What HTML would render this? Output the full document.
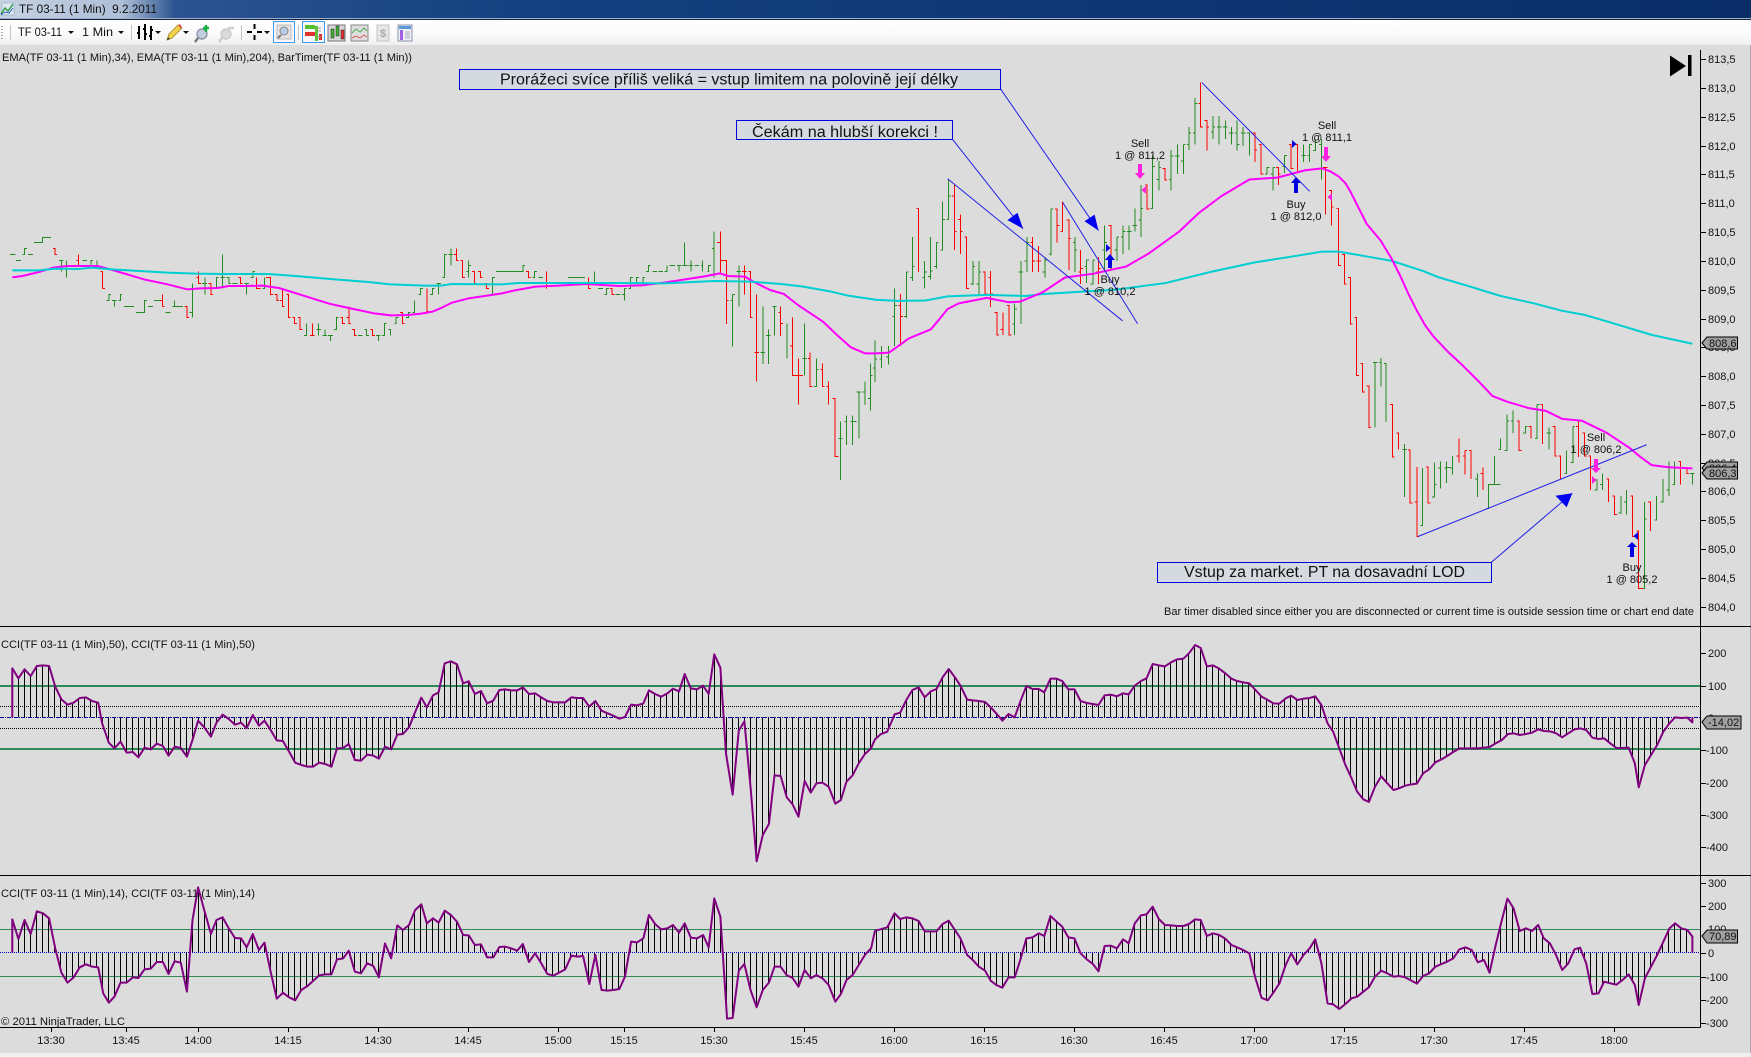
<!DOCTYPE html>
<html><head><meta charset="utf-8"><title>TF 03-11</title>
<style>
html,body{margin:0;padding:0;background:#dcdcdc;width:1751px;height:1057px;overflow:hidden}
svg{display:block;position:absolute;left:0;top:0}
text{font-family:"Liberation Sans",sans-serif;font-size:11px;fill:#111}
.b{vector-effect:non-scaling-stroke}
.c{text-anchor:middle}
</style></head><body>
<svg width="1751" height="1057" viewBox="0 0 1751 1057" xmlns="http://www.w3.org/2000/svg">
<defs>
<linearGradient id="tb" x1="0" x2="1" y1="0" y2="0"><stop offset="0" stop-color="#c5d2e2"/><stop offset=".07" stop-color="#aebfd6"/><stop offset=".1" stop-color="#2c5490"/><stop offset=".3" stop-color="#13407f"/><stop offset="1" stop-color="#0a2d68"/></linearGradient>
<linearGradient id="wb" x1="0" x2="0" y1="0" y2="1"><stop offset="0" stop-color="#fff"/><stop offset=".55" stop-color="#fbfbfb"/><stop offset="1" stop-color="#efefef"/></linearGradient>
<pattern id="st" patternUnits="userSpaceOnUse" x="12" y="0" width="6" height="10"><rect x="0" y="0" width="1" height="10" fill="#000"/></pattern>
<path id="p2l" class="b" d="M22 292L22 145 33 175 44 148 55 168 66 138 77 136 88 138 99 200 110 238 121 254 132 248 143 234 154 232 165 243 176 248 183 310 195 368 205 385 216 365 227 398 238 396 248 412 259 383 270 388 281 371 292 378 302 407 313 380 324 384 335 410 345 360 355 302 366 322 378 350 388 308 399 284 410 297 421 314 432 308 442 325 453 285 464 317 474 302 485 330 496 361 507 363 518 395 529 428 540 435 551 440 561 440 572 428 583 432 594 440 604 385 615 384 625 372 636 420 647 422 658 404 669 407 679 416 690 380 701 388 712 344 722 342 733 322 744 276 755 233 765 262 776 226 786 217 797 130 808 124 819 133 830 190 840 184 851 222 862 213 873 250 884 242 895 210 905 208 916 211 927 211 937 202 948 222 959 220 970 232 981 243 992 247 1002 247 1013 247 1024 232 1035 234 1045 234 1056 260 1067 243 1078 272 1089 280 1099 287 1110 296 1120 291 1131 254 1142 256 1153 250 1163 211 1174 222 1185 230 1196 220 1206 206 1217 214 1227 162 1238 205 1249 208 1260 197 1270 222 1280 103 1291 143 1301 400 1313 524 1324 332 1334 304 1345 500 1356 724 1367 645 1378 612 1388 466 1399 468 1410 532 1420 552 1431 590 1442 483 1453 518 1463 490 1474 488 1485 500 1497 551 1507 540 1517 485 1528 466 1539 430 1550 402 1561 385 1568 358 1578 343 1590 335 1601 292"/>
<path id="p2r" class="b" d="M33 292L35 283 45 278 56 240 67 210 78 202 89 232 100 214 110 207 121 172 132 147 143 172 153 197 165 239 175 241 186 243 197 246 207 262 217 280 228 302 239 282 250 292 260 245 271 198 282 207 293 207 303 217 314 176 325 176 335 183 346 208 357 208 368 243 379 249 390 252 400 255 411 226 422 224 433 229 444 220 454 223 465 197 476 183 486 175 497 132 508 136 519 139 530 127 541 118 552 116 562 100 573 75 583 84 594 139 605 136 616 146 627 160 638 176 648 183 659 187 670 190 681 210 692 230 703 240 713 250 724 251 735 235 745 227 756 240 767 236 778 234 788 229 799 255 810 310 820 335 831 385 842 435 853 475 863 515 874 538 884 546 895 500 906 469 917 490 928 510 938 505 949 497 960 493 970 491 981 460 992 448 1003 427 1014 418 1024 408 1035 396 1046 385 1057 385 1068 385 1079 385 1090 383 1100 381 1111 370 1122 360 1133 342 1143 340 1154 345 1165 342 1176 338 1187 328 1197 333 1208 334 1219 340 1230 352 1241 340 1252 328 1262 325 1273 330 1284 353 1295 357 1305 355 1316 370 1327 384 1338 384 1349 383 1360 430 1367 502 1378 435 1389 405 1400 375 1411 335 1422 310 1432 292 1443 294 1454 293 1463 307 1463 292"/>
<path id="p3l" class="b" d="M22 997L22 898 33 957 44 900 55 942 66 874 77 880 88 895 99 985 110 1058 121 1088 132 1072 143 1042 154 1033 165 1040 176 1042 185 1120 195 1148 205 1130 216 1088 227 1088 238 1072 248 1074 259 1048 270 1046 281 1026 292 1026 302 1062 313 1024 324 1028 335 1115 345 900 355 802 366 870 378 942 388 900 399 892 410 925 421 954 432 955 442 982 453 942 464 990 474 968 485 1055 496 1136 507 1118 518 1132 529 1141 540 1110 551 1098 561 1083 572 1066 583 1063 594 1063 604 1018 615 1015 625 992 636 1055 647 1060 658 1030 669 1038 679 1072 690 970 701 1015 712 916 722 930 733 915 744 870 755 853 765 910 776 895 786 908 797 872 808 885 819 905 830 945 840 946 851 975 862 973 873 1012 884 1012 895 981 905 980 916 985 927 992 937 972 948 1026 959 1000 970 1030 981 1062 992 1067 1002 1058 1013 1048 1024 1007 1035 1010 1045 1008 1056 1092 1067 1005 1078 1110 1089 1112 1099 1110 1110 1107 1120 1070 1131 965 1142 967 1153 955 1163 885 1174 912 1185 928 1196 925 1206 915 1217 938 1227 910 1238 953 1249 955 1260 945 1270 982 1280 835 1291 890 1303 1196 1313 1194 1324 1052 1334 1032 1345 1110 1356 1162 1367 1110 1378 1088 1388 1040 1399 1040 1410 1066 1420 1073 1431 1100 1442 1050 1453 1075 1463 1065 1474 1075 1485 1095 1497 1145 1507 1122 1517 1080 1528 1065 1539 1035 1550 1005 1554 997"/>
<path id="p3r" class="b" d="M-14 997L-7 985 0 932 10 928 22 922 35 880 45 897 56 892 67 895 78 903 89 934 100 934 110 934 121 912 132 902 143 930 153 955 165 1005 175 1020 186 1040 197 1052 207 1082 217 1095 228 1103 239 1072 250 1072 260 1020 271 955 282 952 293 940 303 948 314 888 325 905 335 920 346 952 357 955 368 1000 379 1018 390 1032 400 1054 411 978 422 977 433 985 444 958 454 970 465 910 476 886 486 883 497 860 508 897 519 915 530 916 541 918 552 918 562 912 573 898 583 900 594 948 605 940 616 945 627 956 638 975 648 982 659 990 670 1000 681 1075 692 1134 703 1141 713 1118 724 1090 735 1035 745 1000 756 1033 767 1005 778 985 788 958 799 1030 810 1150 820 1153 831 1167 842 1152 853 1135 863 1130 874 1115 884 1102 895 1070 906 1052 917 1060 928 1070 938 1068 949 1072 960 1082 970 1091 981 1068 992 1060 1003 1040 1014 1032 1024 1025 1035 1015 1046 988 1057 982 1068 990 1079 1027 1090 1020 1100 1058 1111 975 1122 900 1132 836 1143 865 1154 933 1165 925 1176 933 1187 915 1197 955 1208 970 1219 1005 1230 1050 1241 1030 1252 988 1262 983 1273 1030 1284 1122 1295 1120 1305 1085 1316 1090 1327 1094 1338 1080 1349 1063 1360 1095 1367 1155 1378 1075 1389 1040 1400 1005 1411 965 1422 925 1432 910 1443 925 1454 930 1463 950 1463 997"/>
<clipPath id="c2"><use href="#p2l" transform="translate(0,620) scale(.558,.33333)"/><use href="#p2r" transform="translate(875,620) scale(.5587,.33333)"/></clipPath>
<clipPath id="c3"><use href="#p3l" transform="translate(0,620) scale(.558,.33333)"/><use href="#p3r" transform="translate(875,620) scale(.5587,.33333)"/></clipPath>
</defs>

<!-- background -->
<rect width="1751" height="1057" fill="#dcdcdc"/>
<rect x="0" y="1053" width="1751" height="4" fill="#f0f0f0"/>
<rect x="1750" y="45" width="1" height="1008" fill="#a8a8a8"/>

<!-- title bar -->
<rect width="1751" height="18" fill="url(#tb)"/>
<rect y="18" width="1751" height="1" fill="#9db0ca"/>
<rect y="19" width="1751" height="1" fill="#16243e"/>
<g><rect x="2" y="3" width="12" height="12" fill="#dfe8f2" stroke="#8aa0bc" stroke-width=".5"/><path d="M1 14L5 8 8 11 13 4" fill="none" stroke="#2a9c3c" stroke-width="1.4"/><path d="M1 15L5 12 9 13 13 8" fill="none" stroke="#2b62c8" stroke-width="1"/></g>
<text x="19" y="13" style="font-size:12px" fill="#0a1428" textLength="138" lengthAdjust="spacingAndGlyphs" xml:space="preserve">TF 03-11 (1 Min)  9.2.2011</text>

<!-- toolbar -->
<rect y="20" width="1751" height="25" fill="url(#wb)"/>
<path d="M2 26v1M2 29v1M2 32v1M2 35v1M2 38v1" stroke="#aaa" stroke-width="2"/>
<rect x="10" y="25" width="1" height="15" fill="#c4c4c4"/>
<text x="18" y="36" style="font-size:12px" textLength="44" lengthAdjust="spacingAndGlyphs">TF 03-11</text>
<path d="M68 31h6l-3 3z" fill="#111"/>
<text x="82" y="36" style="font-size:12px" textLength="31" lengthAdjust="spacingAndGlyphs">1 Min</text>
<path d="M118 31h6l-3 3z" fill="#111"/>
<rect x="131" y="25" width="1" height="15" fill="#c4c4c4"/>
<!-- bars icon -->
<path d="M139 26v13M145 24v16M151 26v14M137 33h2M143 29h2M145 34h2M149 36h2M151 30h2" stroke="#000" stroke-width="2" fill="none"/>
<path d="M155 31h6l-3 3z" fill="#111"/>
<!-- pencil -->
<path d="M167 40l2-6 9-9 4 3-10 10z" fill="#f3d24a" stroke="#a08a20" stroke-width=".8"/><path d="M178 25l2-1 2 3-1 2z" fill="#e05050"/><path d="M167 40l1-3 2 2z" fill="#333"/>
<path d="M183 31h6l-3 3z" fill="#111"/>
<!-- zoom plus -->
<circle cx="202" cy="34" r="5" fill="#c2cedd" stroke="#8a96a6" stroke-width="1.4"/><path d="M198 38l-3 4" stroke="#777" stroke-width="2.4"/><path d="M206 25v7M203 28h6" stroke="#18b040" stroke-width="2.4"/>
<!-- zoom grey -->
<circle cx="226" cy="34" r="5" fill="#dadada" stroke="#ccc" stroke-width="1.4"/><path d="M222 38l-3 4" stroke="#ccc" stroke-width="2.4"/><path d="M228 28h6" stroke="#ccc" stroke-width="2.4"/>
<rect x="241" y="25" width="1" height="15" fill="#c4c4c4"/>
<!-- cross -->
<path d="M247 32h5M257 32h5M254.500 24v5M254.500 35v5" stroke="#000" stroke-width="2"/>
<path d="M264 31h6l-3 3z" fill="#111"/>
<!-- selected zoom -->
<rect x="273.500" y="21.500" width="21" height="21" fill="#f6f6f6" stroke="#3c9bf0"/>
<rect x="277" y="25" width="14" height="14" fill="#e4e4e4" stroke="#999" stroke-width=".6"/><circle cx="284" cy="31" r="4" fill="#b8cee6" stroke="#888"/><path d="M281 35l-3 3" stroke="#777" stroke-width="2"/>
<rect x="298" y="25" width="1" height="15" fill="#c4c4c4"/>
<!-- selected bars -->
<rect x="302.500" y="21.500" width="22" height="21" fill="#f6f6f6" stroke="#3c9bf0"/>
<rect x="305" y="25" width="10" height="4" fill="#50c030"/><rect x="305" y="32" width="10" height="4" fill="#e03030"/><rect x="315" y="26" width="3" height="15" fill="#60c040"/><rect x="319" y="34" width="3" height="6" fill="#e03030"/><path d="M318 28h3M318 31h3M318 37h3" stroke="#999"/>
<!-- candle icon -->
<rect x="328" y="25" width="17" height="16" fill="#d8d8d8" stroke="#777"/><rect x="331" y="29" width="3" height="9" fill="#40b030" stroke="#222" stroke-width=".5"/><rect x="336" y="26" width="3" height="10" fill="#40b030" stroke="#222" stroke-width=".5"/><rect x="341" y="30" width="3" height="9" fill="#e03030" stroke="#222" stroke-width=".5"/>
<!-- line icon -->
<rect x="351" y="25" width="17" height="16" fill="#dedede" stroke="#888"/><path d="M352 33l4-4 4 3 4-4 3 3" fill="none" stroke="#50b050"/><path d="M352 38l4-2 4 2 4-3 3 2" fill="none" stroke="#e06060"/>
<!-- $ icon -->
<rect x="377" y="25" width="12" height="16" fill="#e6e6e6" stroke="#c4c4c4"/><text x="383" y="37" class="c" style="font-size:11px;font-weight:bold;fill:#aaa">$</text>
<!-- table icon -->
<rect x="398" y="25" width="14" height="16" fill="#eef2f8" stroke="#8890a8"/><rect x="399" y="26" width="12" height="3" fill="#5a9ad8"/><rect x="400" y="30" width="3" height="10" fill="#a060e0"/><path d="M405 32h5M405 34h5M405 36h5M405 38h5" stroke="#aab"/>

<!-- pane grid lines -->
<g shape-rendering="crispEdges">
<rect x="0" y="685" width="1700" height="2" fill="#2e8b57"/>
<rect x="0" y="748" width="1700" height="2" fill="#2e8b57"/>
<path d="M0 706.500H1700M0 728.500H1700" stroke="#000" stroke-dasharray="1 1"/>
<rect x="0" y="929" width="1700" height="1" fill="#2e8b57"/>
<rect x="0" y="976" width="1700" height="1" fill="#2e8b57"/>
</g>

<!-- sticks -->
<rect x="0" y="626" width="1700" height="250" fill="url(#st)" clip-path="url(#c2)" shape-rendering="crispEdges"/>
<rect x="0" y="876" width="1700" height="151" fill="url(#st)" clip-path="url(#c3)" shape-rendering="crispEdges"/>
<g shape-rendering="crispEdges"><path d="M0 717.500H1700" stroke="#0000a0" stroke-dasharray="4 1 1 1"/><path d="M0 952.500H1700" stroke="#0000c0" stroke-dasharray="1 1"/></g>
<g fill="none" stroke="#800080" stroke-width="2" stroke-linejoin="round">
<use href="#p2l" transform="translate(0,620) scale(.558,.33333)"/><use href="#p2r" transform="translate(875,620) scale(.5587,.33333)"/>
<use href="#p3l" transform="translate(0,620) scale(.558,.33333)"/><use href="#p3r" transform="translate(875,620) scale(.5587,.33333)"/>
</g>

<!-- price bars left -->
<g transform="translate(0,200) scale(.558,.33333)" fill="none" shape-rendering="crispEdges">
<path class="b" stroke="#228b22" d="M18 163H28M29 181H38M40 163H44V145H48M50 163H59M61 127H72M72 127H76V112H80M80 112H91M106 181H110V214M110 181H114M115 199H119V181V233M119 199H123M126 199H136M148 181H156M159 199H163V181H167M170 199H174V181V199M191 301H195V283H199M201 301H205V319M205 301H209M212 301H216V283H219M222 319H240M244 337H259V301H263M265 319H274M276 301H287M297 337H306M309 319H313V301V319H328M340 337H345V250V353M362 250H367V232V283M367 250H371M384 265H388V232H392M395 232H399V163V265M399 232H403M406 232H410V250H414M417 250H426M438 250H442V283M442 250H446M449 232H453V214H457M470 265H474V232M545 406H549V370V406M567 388H571V370V406M571 388H575M578 406H582V388V406H586M588 406H592V423M592 406H597M599 388H603V353H607M642 406H650M653 388H657V406H661M674 406H678V423M678 406H682M685 406H689V370H693M696 388H700V406M707 370H710V353H714M728 353H732V337H736M739 337H743V301M750 283H754V265H758M771 283H775V265H779M782 250H786V283M786 250H790M793 232H797V163H801M804 163H808V145V196M808 163H812M836 214H840V181V232M840 196H844M883 283V232H887M889 214H932M932 214H937V196H941M954 232H958V214H962M965 232H973M1018 232H1048M1061 250H1065V214M1072 265H1081M1083 283H1087V265H1091M1103 283H1112M1115 283H1119V265V301M1119 265H1123M1126 265H1130V232H1134M1137 250H1141V232H1145M1148 250H1152V232H1156M1158 214H1162V196H1166M1169 214H1177M1180 214H1188M1191 214H1195V196M1200 196H1210M1213 196H1217V214M1217 196H1221M1227 196V127M1223 196H1232M1234 196H1238V181V214M1238 196H1242M1245 196H1253M1256 196H1259V181V214M1268 214H1270V196H1274M1276 145H1280V94V232M1309 301H1313V283V440M1313 283H1317M1320 214H1324V196V320M1324 214H1328M1367 319V492M1363 457H1371M1373 406H1377V388V492M1377 406H1381M1384 319H1388V406M1388 319H1392M1410 370V476M1438 476H1442V370V526M1442 476H1446M1459 560H1463V475V560M1463 508H1467M1503 716H1506V664V840M1506 716H1510M1513 664H1517V646V735M1524 664H1528V646V735M1528 664H1535M1535 576H1539V716M1539 576H1543M1546 576H1550V545V615M1556 595H1560V490V632M1560 526H1564"/>
<path class="b" stroke="#ff0000" d="M95 145H99V163H102M141 163V199M137 181H141M184 214V265M180 214H184M184 265H188M291 283V319M287 301H291M291 319H295M331 319H335V353H339M352 232H356V214V250H360M378 250V283H382M374 250H378M427 232H431V250H435M460 232V265H467M477 232H485V283H489M492 283H496V301H500M502 301H506V265V319H510M513 283H517V353H521M524 353H528V370H532M534 353H538V388H542M556 406H560V370M560 406H564M610 353H614V370H618M621 353H625V319V370H629M631 388H635V406H639M664 388H668V406H672M717 337H721V370H725M765 265V335H769M814 163H818V145V181H822M825 181H829V232H833M846 214H850V250H854M857 214H861V232H865M868 250H872V265H876M943 214H947V232H951M979 214V265M1052 250H1055V232V265H1059M1093 265H1097V283H1101M1285 127H1291V94V217M1291 181H1302V372M1302 301H1306M1334 196V283M1330 214H1338M1341 214H1345V353H1349M1356 283V545M1352 458H1360M1395 337H1399V319V408M1399 370H1403M1416 438H1420V352V526H1427M1427 526H1431V475V614M1431 526H1439M1448 475H1452V458V560H1456M1470 508H1474V490V560H1478M1481 560H1485V545V614M1492 595H1496V769H1503"/>
</g>

<!-- price bars right -->
<g transform="translate(875,50) scale(.5587,.36995)" fill="none" shape-rendering="crispEdges">
<path class="b" stroke="#228b22" d="M-4 860H0V785V897M0 835H4M8 835H12V800V860M12 820H16M20 830H24V800V850M24 815H28M31 720H35V645V800M35 690H39M52 720H56V600V725M56 600H60M63 615H67V505V625M67 585H71M85 615H89V570V645M89 600H93M95 612H99V505V620M99 598H103M106 585H110V520V590M110 520H114M117 540H121V410V540M121 458H125M128 458H132V350V460M132 395H136M171 632H175V570V635M175 585H179M182 632H186V570V660M186 600H190M246 740H250V685V770M250 700H254M257 600H261V570V740M261 600H265M268 570H272V505V600M272 520H276M300 600H304V560V615M304 568H308M311 552H315V428V555M315 430H319M354 520H358V505V600M358 540H362M375 585H379V568V630M379 568H383M386 632H390V568V632M390 568H394M407 540H411V475V600M411 520H415M429 540H433V505V570M433 505H437M440 505H444V475V552M444 490H448M451 490H455V475V540M455 490H459M461 475H465V428V490M465 475H469M472 460H476V365V505M476 428H480M493 428H497V285V430M497 315H501M504 350H508V300V380M508 317H512M526 350H530V270V380M530 287H534M537 287H541V255V335M541 287H545M548 300H552V255V335M552 255H556M558 255H562V208V270M562 225H566M569 225H573V130V255M573 145H577M601 222H605V178V240M605 208H609M612 208H616V178V255M616 208H620M623 208H627V190V240M627 208H631M634 225H638V208V255M638 225H642M644 225H648V190V272M648 255H652M655 225H659V208V260M659 225H663M666 225H670V285M698 335H702V317H706M708 335H712V317V380M712 317H716M729 315H733V285V332M733 285H737M763 285H767V255V303M767 285H771M774 285H778V255V303M778 255H782M784 272H788V240M795 255H799V240V350M891 845H895V1020M895 845H899M902 845H906V833V910M911 848H915V1005M944 1080H948V1065V1208M948 1080H952M976 1285H980V1130V1285M997 1208H1001V1115V1208M1001 1175H1005M1008 1130H1012V1112V1185M1019 1130H1023V1112V1170M1023 1128H1030M1030 1130H1034V1098V1147M1074 1160H1078V1145V1208M1094 1240H1098V1175H1120M1105 1175H1109V1098V1175M1116 1080H1120V1050V1080M1127 1082H1131V985V1082M1131 1003H1135M1138 1003H1142V975V1035M1160 1035H1164V1018H1168M1181 1050H1185V958V1050M1185 958H1189M1202 1035H1206V1020V1080M1206 1035H1210M1234 1145H1238V1082V1145M1245 1115H1249V1018V1115M1249 1018H1253M1288 1190H1292V1160V1190M1298 1175H1302V1145V1190M1331 1252H1335V1205V1252M1341 1222H1345V1190V1255M1373 1455H1377V1222V1455M1377 1268H1381M1395 1270H1399V1205V1270M1406 1222H1410V1160V1222M1417 1190H1421V1112V1205M1427 1175H1431V1112V1175M1459 1145H1467M1463 1145V1175"/>
<path class="b" stroke="#ff0000" d="M46 660V800M42 690H46M46 720H50M74 428H78V600M138 395H142V365V540M142 490H146M149 458H153V445V552M153 490H157M160 505H164V645H168M193 600H197V660H201M203 615H207V597V695M207 660H211M214 710H218V770H222M225 755H229V710V770M236 690H240V770H244M278 520H282V505V600M282 570H286M289 570H293V530V600M293 570H297M322 430H326V520M326 475H330M332 490H336V410M343 460H347V595M347 510H351M364 600H368V540V632M368 590H372M396 600H400V560V632M400 590H404M418 475H422V595M483 365H487V430H491M515 320H519V352H523M579 145H583V88V208H587M590 190H594V272M594 208H598M676 225H680V303M680 270H684M687 255H691V335H695M718 317H722V365M722 335H726M741 255H745V320H749M752 255H756V333M802 317H806V445M806 317H810M813 380H817V475M817 425H821M826 428H830V583H834M836 553H840V632H844M847 615H851V740H855M858 723H862V880H866M869 848H873V925H877M880 908H884V1020H888M922 958H926V1100H930M933 1035H937V1080M954 1081H958V1225H962M966 1222H970V1127V1315H974M986 1127H990V1225H994M1041 1098H1045V1050V1115M1052 1098H1056V1082V1147M1056 1082H1060M1063 1082H1067V1160M1084 1145H1088V1128V1190M1149 1003H1153V1082H1157M1170 1018H1174V1050M1191 958H1195V1065M1213 1018H1217V1098H1221M1223 1098H1227V1160M1255 1018H1259V1003V1100M1266 1035H1270V1098H1274M1277 1098H1281V1190M1309 1160H1313V1222M1320 1205H1324V1255H1328M1352 1205H1356V1315H1360M1363 1300H1367V1455H1375M1384 1222H1388V1300M1438 1112H1442V1175M1449 1130H1453V1145H1457"/>
</g>

<!-- EMA lines -->
<g fill="none" stroke-width="2" stroke-linejoin="round">
<g transform="translate(0,200) scale(.558,.33333)">
<path class="b" stroke="#ff00ff" d="M22 232L40 228 70 216 95 203 120 198 175 198 195 207 230 224 260 239 300 253 335 268 360 265 390 264 410 258 440 258 470 257 500 264 550 290 590 311 625 324 670 340 700 346 730 345 755 341 775 335 792 323 810 308 840 295 900 280 920 272 960 260 1000 257 1050 252 1110 258 1150 256 1190 248 1260 230 1290 220 1305 228 1335 230 1350 245 1380 270 1405 282 1430 315 1475 365 1500 405 1525 442 1550 460 1568 460"/>
<path class="b" stroke="#00ced1" d="M22 211L70 211 100 206 140 207 165 203 200 208 250 213 300 218 350 221 400 222 480 222 530 228 600 238 660 246 700 253 760 257 790 257 810 252 900 253 930 249 1000 249 1100 249 1190 250 1280 243 1345 245 1400 252 1440 260 1490 275 1520 287 1568 299"/>
</g>
<g transform="translate(875,50) scale(.5587,.36995)">
<path class="b" stroke="#00ced1" d="M0 675L40 678 90 677 130 666 200 662 270 665 300 660 370 653 430 648 520 630 600 600 680 574 760 555 800 545 830 545 880 558 925 570 980 597 1010 615 1060 637 1120 665 1180 685 1230 705 1270 716 1320 738 1390 770 1463 794"/>
<path class="b" stroke="#ff00ff" d="M0 820L25 818 42 800 60 780 100 755 115 728 130 700 150 685 200 670 240 682 260 680 300 655 340 615 390 605 450 585 490 550 545 490 580 440 620 395 670 350 720 345 770 325 800 320 815 328 830 342 842 360 850 380 865 425 880 470 905 515 925 565 940 610 955 660 970 705 985 745 1000 775 1025 815 1050 850 1080 895 1105 935 1130 950 1170 968 1200 975 1230 997 1265 1002 1310 1035 1350 1075 1370 1100 1390 1122 1420 1128 1463 1131"/>
</g>
</g>

<!-- drawn annotation lines -->
<g transform="translate(875,50) scale(.5587,.36995)">
<g fill="none" stroke="#2222e8" stroke-width="1">
<path class="b" d="M225 106L400 488M139 242L265 483M130 348L443 732M336 412L470 740M585 88L778 382M972 1315L1381 1067M1103 1385L1248 1198"/>
</g>
<path d="M265 483L237 460 255 440zM400 488L375 463 393 445zM1248 1198L1218 1205 1238 1236z" fill="#0000f0"/>
</g>

<!-- boxes -->
<rect x="459.500" y="69.500" width="541" height="20" fill="#d4dae0" stroke="#0000e0"/>
<text x="500" y="84.500" style="font-size:15.500px" textLength="458" lengthAdjust="spacingAndGlyphs">Prorážeci svíce příliš veliká = vstup limitem na polovině její délky</text>
<rect x="736.500" y="120.500" width="216" height="19" fill="#d4dae0" stroke="#0000e0"/>
<text x="752" y="137" style="font-size:15.500px" textLength="186" lengthAdjust="spacingAndGlyphs">Čekám na hlubší korekci !</text>
<rect x="1157.500" y="562.500" width="334" height="20" fill="#d4dae0" stroke="#0000e0"/>
<text x="1184" y="577" style="font-size:15.500px" textLength="281" lengthAdjust="spacingAndGlyphs">Vstup za market. PT na dosavadní LOD</text>

<!-- execution arrows -->
<g fill="#0000e0">
<path d="M1110 254l-5 6h3v8h4v-8h3z"/><path d="M1296 177l-5 6h3v10h4v-10h3z"/><path d="M1632 542l-5 5h3v10h4v-10h3z"/>
<path d="M1106 244l4.500 4-4.500 4z"/><path d="M1292 140l4.500 4-4.500 4z"/><path d="M1638 532l-4.500 4 4.500 4z"/>
</g>
<g fill="#ff20e0">
<path d="M1140 179l5-6h-3v-9h-4v9h-3z"/><path d="M1326 162l5-6h-3v-9h-4v9h-3z"/><path d="M1596 473l5-5h-3v-9h-4v9h-3z"/>
<path d="M1146 186l-4.500 4 4.500 4z"/><path d="M1332 193l-4.500 4 4.500 4z"/><path d="M1592 476l4.500 4-4.500 4z"/>
</g>
<text x="1140" y="147" class="c">Sell</text><text x="1140" y="159" class="c">1 @ 811,2</text>
<text x="1327" y="129" class="c">Sell</text><text x="1327" y="141" class="c">1 @ 811,1</text>
<text x="1110" y="283" class="c">Buy</text><text x="1110" y="295" class="c">1 @ 810,2</text>
<text x="1296" y="208" class="c">Buy</text><text x="1296" y="220" class="c">1 @ 812,0</text>
<text x="1596" y="441" class="c">Sell</text><text x="1596" y="453" class="c">1 @ 806,2</text>
<text x="1632" y="571" class="c">Buy</text><text x="1632" y="583" class="c">1 @ 805,2</text>

<!-- end icon -->
<path d="M1670 55.500L1686 66 1670 76.500z" fill="#000"/><rect x="1688" y="55" width="3.500" height="21" fill="#000"/>

<!-- frames -->
<g shape-rendering="crispEdges" stroke="#000" fill="none">
<path d="M0 626.500H1751M0 875.500H1751M0 1027.500H1700.500M1700.500 50V1027.500"/>
<path d="M1700 59.500h6M1700 88.500h6M1700 117.500h6M1700 146.500h6M1700 174.500h6M1700 203.500h6M1700 232.500h6M1700 261.500h6M1700 290.500h6M1700 319.500h6M1700 347.500h6M1700 376.500h6M1700 405.500h6M1700 434.500h6M1700 463.500h6M1700 491.500h6M1700 520.500h6M1700 549.500h6M1700 578.500h6M1700 607.500h6"/>
<path d="M1700 653.500h6M1700 686.500h6M1700 750.500h6M1700 783.500h6M1700 815.500h6M1700 847.500h6M1700 883.500h6M1700 906.500h6M1700 953.500h6M1700 977.500h6M1700 1000.500h6M1700 1023.500h6"/>
<path d="M51.500 1027v5M126.500 1027v5M198.500 1027v5M288.500 1027v5M378.500 1027v5M468.500 1027v5M558.500 1027v5M624.500 1027v5M714.500 1027v5M804.500 1027v5M894.500 1027v5M984.500 1027v5M1074.500 1027v5M1164.500 1027v5M1254.500 1027v5M1344.500 1027v5M1434.500 1027v5M1524.500 1027v5M1614.500 1027v5"/>
</g>

<!-- price labels -->
<g>
<text x="1708" y="63">813,5</text><text x="1708" y="92">813,0</text><text x="1708" y="121">812,5</text><text x="1708" y="150">812,0</text><text x="1708" y="178">811,5</text><text x="1708" y="207">811,0</text><text x="1708" y="236">810,5</text><text x="1708" y="265">810,0</text><text x="1708" y="294">809,5</text><text x="1708" y="323">809,0</text><text x="1708" y="351">808,5</text><text x="1708" y="380">808,0</text><text x="1708" y="409">807,5</text><text x="1708" y="438">807,0</text><text x="1708" y="467">806,5</text><text x="1708" y="495">806,0</text><text x="1708" y="524">805,5</text><text x="1708" y="553">805,0</text><text x="1708" y="582">804,5</text><text x="1708" y="611">804,0</text>
<text x="1708" y="657">200</text><text x="1708" y="690">100</text><text x="1708" y="722">0</text><text x="1706" y="754">-100</text><text x="1706" y="787">-200</text><text x="1706" y="819">-300</text><text x="1706" y="851">-400</text>
<text x="1708" y="887">300</text><text x="1708" y="910">200</text><text x="1708" y="933">100</text><text x="1708" y="957">0</text><text x="1706" y="981">-100</text><text x="1706" y="1004">-200</text><text x="1706" y="1027">-300</text>
</g>

<!-- value tags -->
<g stroke="#000" stroke-width="1" fill="#a0a0a0"><path d="M1702 343l5-6h30.500v12H1707z"/><path d="M1702 468l5-6h30.500v12H1707z"/></g>
<text x="1709" y="347">808,6</text><text x="1709" y="472">806,4</text>
<g stroke="#000" stroke-width="1" fill="#a0a0a0">
<path d="M1702 473l5-6h30.500v12H1707z"/>
<path d="M1702 722l5-6h34v13H1707z"/>
<path d="M1702 936l5-6h30.500v13H1707z"/>
</g>
<text x="1709" y="477">806,3</text><text x="1708" y="726">-14,02</text><text x="1709" y="940">70,89</text>

<!-- time labels -->
<g class="c">
<text class="c" x="51" y="1044">13:30</text><text class="c" x="126" y="1044">13:45</text><text class="c" x="198" y="1044">14:00</text><text class="c" x="288" y="1044">14:15</text><text class="c" x="378" y="1044">14:30</text><text class="c" x="468" y="1044">14:45</text><text class="c" x="558" y="1044">15:00</text><text class="c" x="624" y="1044">15:15</text><text class="c" x="714" y="1044">15:30</text><text class="c" x="804" y="1044">15:45</text><text class="c" x="894" y="1044">16:00</text><text class="c" x="984" y="1044">16:15</text><text class="c" x="1074" y="1044">16:30</text><text class="c" x="1164" y="1044">16:45</text><text class="c" x="1254" y="1044">17:00</text><text class="c" x="1344" y="1044">17:15</text><text class="c" x="1434" y="1044">17:30</text><text class="c" x="1524" y="1044">17:45</text><text class="c" x="1614" y="1044">18:00</text>
</g>

<!-- pane captions -->
<text x="2" y="61" textLength="410" lengthAdjust="spacingAndGlyphs">EMA(TF 03-11 (1 Min),34), EMA(TF 03-11 (1 Min),204), BarTimer(TF 03-11 (1 Min))</text>
<text x="1" y="648" textLength="254" lengthAdjust="spacingAndGlyphs">CCI(TF 03-11 (1 Min),50), CCI(TF 03-11 (1 Min),50)</text>
<text x="1" y="897" textLength="254" lengthAdjust="spacingAndGlyphs">CCI(TF 03-11 (1 Min),14), CCI(TF 03-11 (1 Min),14)</text>
<text x="1" y="1025" textLength="124" lengthAdjust="spacingAndGlyphs">© 2011 NinjaTrader, LLC</text>
<text x="1164" y="615" textLength="530" lengthAdjust="spacingAndGlyphs">Bar timer disabled since either you are disconnected or current time is outside session time or chart end date</text>
</svg>
</body></html>
